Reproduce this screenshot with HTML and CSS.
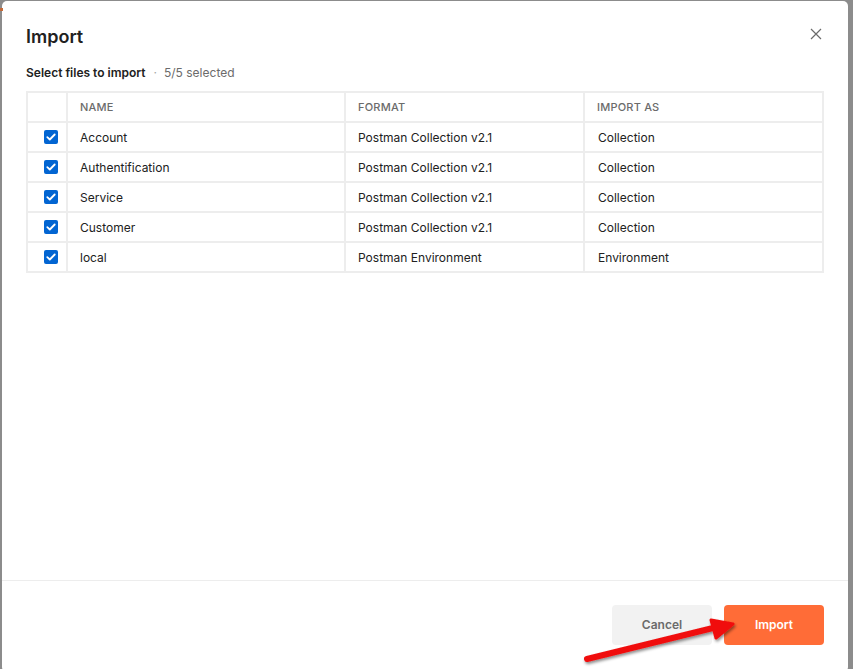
FILE: index.html
```html
<!DOCTYPE html>
<html>
<head>
<meta charset="utf-8">
<link rel="stylesheet" href="styles.css">
</head>
<body>
<div class="backdrop">
  <div class="bg-strip"></div>
  <div class="modal">
    <div class="modal-header">
      <h1 class="title">Import</h1>
      <button class="close" aria-label="Close">
        <svg width="12" height="12" viewBox="0 0 12 12"><path d="M1 1L11 11M11 1L1 11" stroke="#6b6b6b" stroke-width="1.2" fill="none"/></svg>
      </button>
    </div>
    <div class="modal-body">
      <div class="subtitle"><span class="sub-strong">Select files to import</span><span class="dot">·</span><span class="sub-muted">5/5 selected</span></div>
      <table class="files">
        <colgroup><col class="c-check"><col class="c-name"><col class="c-format"><col class="c-as"></colgroup>
        <thead>
          <tr><th></th><th>NAME</th><th>FORMAT</th><th>IMPORT AS</th></tr>
        </thead>
        <tbody>
          <tr><td class="chk"><span class="box"><svg width="10" height="8" viewBox="0 0 10 8"><path d="M1.3 4.2L3.8 6.5L8.7 1.5" stroke="#fff" stroke-width="1.8" fill="none" stroke-linecap="round" stroke-linejoin="round"/></svg></span></td><td>Account</td><td>Postman Collection v2.1</td><td class="as">Collection</td></tr>
          <tr><td class="chk"><span class="box"><svg width="10" height="8" viewBox="0 0 10 8"><path d="M1.3 4.2L3.8 6.5L8.7 1.5" stroke="#fff" stroke-width="1.8" fill="none" stroke-linecap="round" stroke-linejoin="round"/></svg></span></td><td>Authentification</td><td>Postman Collection v2.1</td><td class="as">Collection</td></tr>
          <tr><td class="chk"><span class="box"><svg width="10" height="8" viewBox="0 0 10 8"><path d="M1.3 4.2L3.8 6.5L8.7 1.5" stroke="#fff" stroke-width="1.8" fill="none" stroke-linecap="round" stroke-linejoin="round"/></svg></span></td><td>Service</td><td>Postman Collection v2.1</td><td class="as">Collection</td></tr>
          <tr><td class="chk"><span class="box"><svg width="10" height="8" viewBox="0 0 10 8"><path d="M1.3 4.2L3.8 6.5L8.7 1.5" stroke="#fff" stroke-width="1.8" fill="none" stroke-linecap="round" stroke-linejoin="round"/></svg></span></td><td>Customer</td><td>Postman Collection v2.1</td><td class="as">Collection</td></tr>
          <tr><td class="chk"><span class="box"><svg width="10" height="8" viewBox="0 0 10 8"><path d="M1.3 4.2L3.8 6.5L8.7 1.5" stroke="#fff" stroke-width="1.8" fill="none" stroke-linecap="round" stroke-linejoin="round"/></svg></span></td><td>local</td><td>Postman Environment</td><td class="as">Environment</td></tr>
        </tbody>
      </table>
    </div>
    <div class="modal-footer">
      <button class="btn btn-secondary">Cancel</button>
      <button class="btn btn-primary">Import</button>
    </div>
  </div>
  <svg class="arrow" width="853" height="669" viewBox="0 0 853 669">
    <defs>
      <filter id="sh" x="-10%" y="-10%" width="130%" height="140%">
        <feDropShadow dx="1" dy="2" stdDeviation="1.5" flood-color="#000" flood-opacity="0.45"/>
      </filter>
    </defs>
    <g filter="url(#sh)">
      <path d="M587 659 L713 628" stroke="#f01010" stroke-width="6" stroke-linecap="round" fill="none"/>
      <path d="M711 620 L733 624 L716 638 Z" fill="#f01010" stroke="#f01010" stroke-width="3" stroke-linejoin="round"/>
    </g>
  </svg>
</div>
</body>
</html>
```

FILE: styles.css
```css
* { box-sizing: border-box; }
html, body { margin: 0; padding: 0; }
body {
  width: 853px;
  height: 669px;
  overflow: hidden;
  font-family: Inter, "Noto Sans", sans-serif;
  background: #8c8c8c;
}
.backdrop {
  position: relative;
  width: 853px;
  height: 669px;
  padding: 1px 0 0 2px;
}
.bg-strip {
  position: absolute;
  left: 0;
  top: 8px;
  width: 3px;
  height: 3px;
  background: #c46a3a;
}
.modal {
  width: 846px;
  height: 671px;
  background: #fff;
  border-radius: 5px;
  display: flex;
  flex-direction: column;
}
.modal-header {
  display: flex;
  align-items: center;
  justify-content: space-between;
  padding: 18px 24px 0 24px;
  height: 54px;
}
.title {
  margin: 0;
  font-size: 18px;
  font-weight: 600;
  color: #212121;
  line-height: 28px;
}
.close {
  border: 0;
  background: transparent;
  padding: 0;
  width: 12px;
  height: 12px;
  margin-top: -6px;
  margin-right: 2px;
  display: flex;
}
.modal-body {
  flex: 1;
  padding: 0 24px;
}
.subtitle {
  font-size: 12px;
  line-height: 18px;
  padding-top: 9px;
  height: 36px;
  color: #212121;
}
.sub-strong { font-weight: 600; }
.dot { color: #a6a6a6; margin: 0 7px 0 8px; }
.sub-muted { color: #6b6b6b; }
.files {
  width: 796px;
  border-collapse: collapse;
  table-layout: fixed;
  font-size: 12px;
  color: #212121;
  border: 2px solid #ededed;
}
.c-check { width: 40px; }
.c-name { width: 278px; }
.c-format { width: 239px; }
.c-as { width: 239px; }
.files th, .files td {
  border: 2px solid #ededed;
  height: 30px;
  padding: 0 12px;
  text-align: left;
  white-space: nowrap;
}
.files th {
  font-size: 11px;
  font-weight: 500;
  color: #6b6b6b;
  letter-spacing: 0.2px;
}
.files td.as { padding-left: 13px; }
.files td.chk { padding: 0 0 0 16px; }
.box {
  display: flex;
  align-items: center;
  justify-content: center;
  width: 14px;
  height: 14px;
  border-radius: 2px;
  background: #0265d2;
}
.modal-footer {
  height: 92px;
  border-top: 1px solid #ededed;
  display: flex;
  justify-content: flex-end;
  align-items: flex-start;
  gap: 12px;
  padding: 24px 24px 0 0;
}
.btn {
  width: 100px;
  height: 40px;
  border: 0;
  border-radius: 4px;
  font-family: Inter, "Noto Sans", sans-serif;
  font-size: 12px;
  font-weight: 600;
  padding: 0 0 2px 0;
}
.btn-secondary { background: #f2f2f2; color: #6b6b6b; }
.btn-primary { background: #ff6c37; color: #fff; }
.arrow {
  position: absolute;
  left: 0;
  top: 0;
  pointer-events: none;
}
```
